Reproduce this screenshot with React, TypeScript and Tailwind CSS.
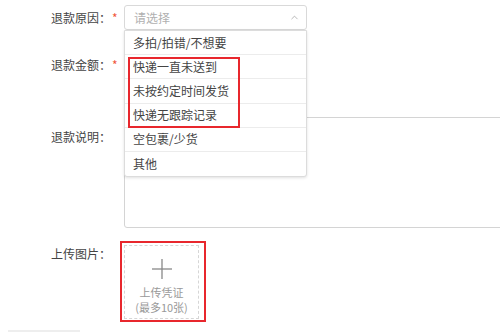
import { ChevronUp } from "lucide-react";

const reasons = [
  "多拍/拍错/不想要",
  "快递一直未送到",
  "未按约定时间发货",
  "快递无跟踪记录",
  "空包裹/少货",
  "其他",
];

function Label({ text, required }: { text: string; required?: boolean }) {
  return (
    <div className="w-[73px] shrink-0 text-[12px] text-[#444] whitespace-nowrap">
      {text}
      {required && <span className="text-[#f0563a] ml-[1px]">*</span>}
    </div>
  );
}

export default function App() {
  return (
    <div
      className="w-[500px] h-[333px] overflow-hidden bg-white pl-[51px] pt-[5px] relative"
      style={{ fontFamily: '"Noto Sans CJK SC", "Noto Sans", sans-serif' }}
    >
      {/* 退款原因 */}
      <div className="flex items-center h-[25px] relative z-20">
        <Label text="退款原因：" required />
        <div className="relative w-[183px] h-[25px]">
          <div className="h-full border border-[#d9d9d9] rounded-[3px] flex items-center justify-between pl-[9px] pr-[6px]">
            <span className="text-[12px] text-[#b0b0b0]">请选择</span>
            <ChevronUp className="w-[11px] h-[11px] text-[#999]" strokeWidth={1.5} />
          </div>
          {/* 下拉 */}
          <div className="absolute left-0 top-[25px] w-[183px] bg-white border border-[#dcdcdc] rounded-b-[3px] shadow-[0_1px_3px_rgba(0,0,0,0.12)]">
            {reasons.map((r, i) => (
              <div
                key={r}
                className={`h-[24.2px] flex items-center pl-[8px] text-[12px] text-[#444] ${
                  i < reasons.length - 1 ? "border-b border-[#ececec]" : ""
                }`}
              >
                {r}
              </div>
            ))}
            <div className="absolute left-[3px] top-[26px] w-[112px] h-[71px] border-2 border-[#e8272d]" />
          </div>
        </div>
      </div>

      {/* 退款金额 */}
      <div className="flex items-center h-[24px] mt-[23px]">
        <Label text="退款金额：" required />
        <div className="w-[183px] h-[24px] border border-[#d9d9d9] rounded-[3px]" />
      </div>

      {/* 退款说明 */}
      <div className="flex mt-[40px]">
        <div className="pt-[11px]">
          <Label text="退款说明：" />
        </div>
        <div className="w-[400px] h-[111px] shrink-0 border border-[#d4d4d4] rounded-[3px]" />
      </div>

      {/* 上传图片 */}
      <div className="flex mt-[13px]">
        <div className="pt-[4px]">
          <Label text="上传图片：" />
        </div>
        <div className="-ml-[4px] w-[86px] h-[81px] border-2 border-[#e8272d] p-[2px]">
          <div className="w-[75px] h-[74px] border border-dashed border-[#d6d6d6] flex flex-col items-center pt-[12px]">
            <svg width="22" height="22" viewBox="0 0 22 22" className="mb-[4px]">
              <line x1="11" y1="1" x2="11" y2="21" stroke="#888" strokeWidth="1.3" />
              <line x1="1" y1="11" x2="21" y2="11" stroke="#888" strokeWidth="1.3" />
            </svg>
            <div className="text-[11px] leading-[16px] text-[#999]">上传凭证</div>
            <div className="text-[11px] leading-[14px] text-[#999]">(最多10张)</div>
          </div>
        </div>
      </div>

      <div className="absolute left-[8px] top-[330px] w-[72px] h-[2px] bg-[#eee]" />
    </div>
  );
}
